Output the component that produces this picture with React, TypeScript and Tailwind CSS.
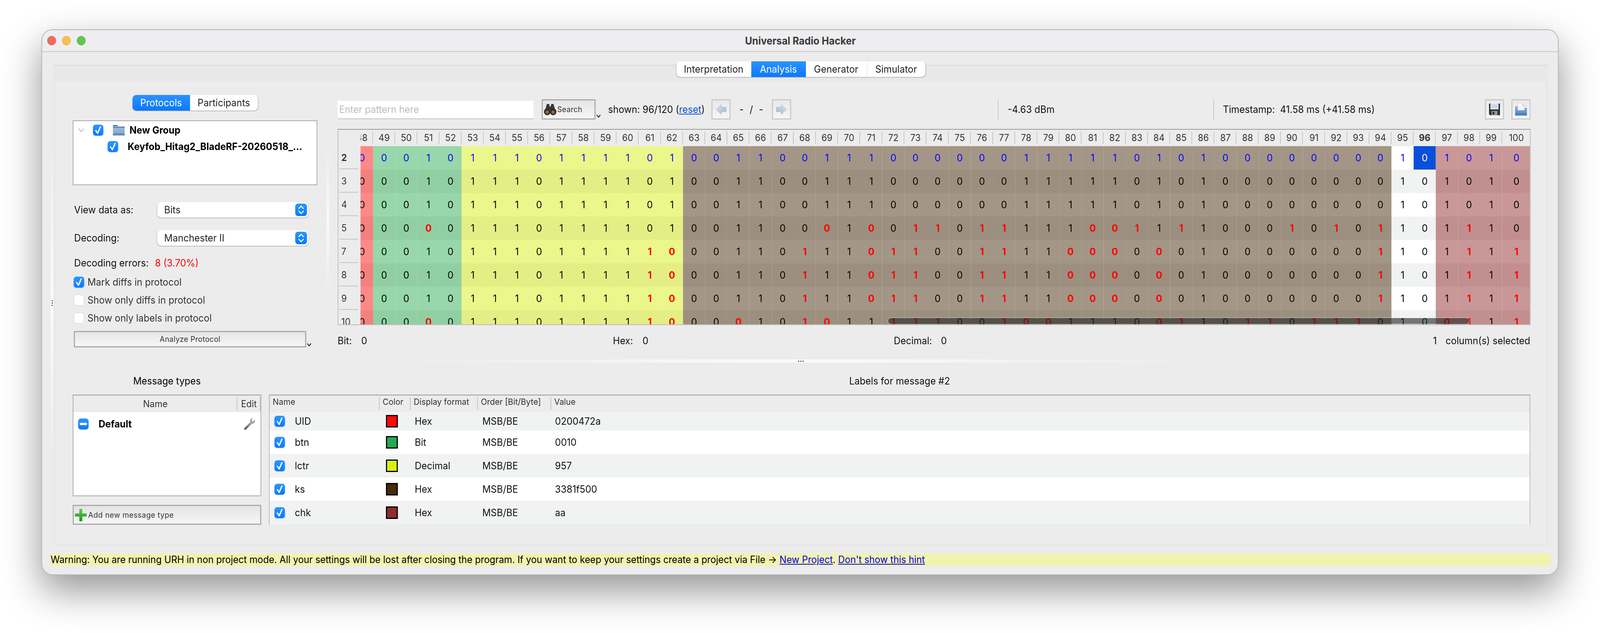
import React from "react";

const BASE = "00010" + "1110111101" + "001100111" + "000000" + "11111" + "0101" + "00000000" + "101010";
const C0 = 48;
const OV: Record<string, number[][]> = {
  r5: [[51,0],[69,0],[71,0],[73,1],[74,1],[76,1],[77,1],[81,0],[82,0],[83,1],[85,1],[90,1],[92,1],[94,1],[98,1]],
  r7: [[61,1],[62,0],[68,1],[71,0],[72,1],[73,1],[76,1],[77,1],[80,0],[81,0],[82,0],[84,0],[94,1],[98,1],[100,1]],
  r10: [[51,0],[61,1],[62,0],[65,0],[68,1],[69,0],[72,1],[73,1],[74,1],[77,1],[78,0],[79,0],[84,0],[85,1],[88,1],[89,1],[91,1],[92,1],[93,1],[97,0],[98,1],[100,1]],
};
const ROWS = [
  { n: 2, ov: [] as number[][] },
  { n: 3, ov: [] as number[][] },
  { n: 4, ov: [] as number[][] },
  { n: 5, ov: OV.r5 },
  { n: 7, ov: OV.r7 },
  { n: 8, ov: OV.r7 },
  { n: 9, ov: OV.r7 },
  { n: 10, ov: OV.r10 },
];
const COLS = Array.from({ length: 53 }, (_, i) => C0 + i);

function bg(col: number, dark: boolean) {
  if (col === 48) return dark ? "bg-[#f48080]" : "bg-[#fe8888]";
  if (col <= 52) return dark ? "bg-[#91cfa2]" : "bg-[#98d7aa]";
  if (col <= 62) return dark ? "bg-[#e4ee84]" : "bg-[#ebf78b]";
  if (col <= 94) return dark ? "bg-[#9c8f7f]" : "bg-[#a39686]";
  if (col <= 96) return dark ? "bg-[#f1f3f3]" : "bg-white";
  return dark ? "bg-[#c18f8f]" : "bg-[#c99797]";
}

function Check({ size = 28, on = true, minus = false }: { size?: number; on?: boolean; minus?: boolean }) {
  if (!on)
    return <div className="w-[28px] h-[28px] rounded-[7px] bg-white border border-[#cfcfcf] shrink-0" />;
  return (
    <div className="w-[28px] h-[28px] rounded-[7px] bg-gradient-to-b from-[#2b97ff] to-[#0a78ff] shadow-[0_1px_2px_rgba(0,90,220,0.35)] flex items-center justify-center shrink-0">
      {minus ? (
        <div className="w-[20px] h-[6px] rounded-[3px] bg-white" />
      ) : (
        <svg width={size - 8} height={size - 6} viewBox="0 0 20 22">
          <path d="M3.5 12 L8.5 19 L16 3" fill="none" stroke="white" strokeWidth="3.4" strokeLinecap="round" strokeLinejoin="round" />
        </svg>
      )}
    </div>
  );
}

function Stepper() {
  return (
    <div className="w-[32px] h-[32px] rounded-[8px] bg-gradient-to-b from-[#2b97ff] to-[#0a78ff] flex items-center justify-center">
      <svg width="20" height="26" viewBox="0 0 20 26">
        <path d="M4 9.5 L10 3.5 L16 9.5 M4 16.5 L10 22.5 L16 16.5" fill="none" stroke="white" strokeWidth="2.6" strokeLinecap="round" strokeLinejoin="round" />
      </svg>
    </div>
  );
}

function Select({ label, value }: { label: string; value: string }) {
  return (
    <div className="flex items-center h-[40px] pl-[4px]">
      <div className="w-[225px] text-[#111]">{label}</div>
      <div className="w-[410px] h-[40px] rounded-[10px] bg-white shadow-[0_1px_2px_rgba(0,0,0,0.38)] flex items-center justify-between pl-[19px] pr-[4px] text-[#222]">
        <span>{value}</span>
        <Stepper />
      </div>
    </div>
  );
}

function Folder() {
  return (
    <svg width="32" height="28" viewBox="0 0 32 28" className="shrink-0">
      <defs>
        <linearGradient id="fo" x1="0" y1="0" x2="0" y2="1">
          <stop offset="0" stopColor="#a9c4e4" />
          <stop offset="1" stopColor="#7c9fca" />
        </linearGradient>
      </defs>
      <path d="M0 1h12v3h20v24H0z" fill="url(#fo)" />
      <rect x="0" y="1" width="13" height="3" fill="#4e77a8" />
      <rect x="0" y="6" width="32" height="2" fill="#4e77a8" />
      <rect x="0" y="23" width="32" height="3" fill="#5b83b3" />
    </svg>
  );
}

function Binoculars() {
  return (
    <svg width="34" height="32" viewBox="0 0 34 32">
      <path d="M8 2h6l2 7h2l2-7h6l6 20H22l-1-5h-8l-1 5H2z" fill="#3a3a3a" />
      <circle cx="9" cy="22" r="9" fill="#2f2f2f" />
      <circle cx="25" cy="22" r="9" fill="#2f2f2f" />
      <circle cx="9" cy="23" r="4.5" fill="#a8641e" />
      <circle cx="25" cy="23" r="4.5" fill="#a8641e" />
    </svg>
  );
}

function Arrow({ flip = false }: { flip?: boolean }) {
  return (
    <svg width="30" height="28" viewBox="0 0 30 28" className={flip ? "-scale-x-100" : ""}>
      <defs>
        <linearGradient id="ar" x1="0" y1="0" x2="1" y2="1">
          <stop offset="0" stopColor="#dfe7f1" />
          <stop offset="1" stopColor="#9db3d0" />
        </linearGradient>
      </defs>
      <path d="M1 14 L16 1 V8 H29 V20 H16 V27 Z" fill="url(#ar)" stroke="#b4bfce" strokeWidth="1" strokeLinejoin="round" />
    </svg>
  );
}

function Floppy() {
  return (
    <svg width="30" height="30" viewBox="0 0 30 30">
      <path d="M0 0h30v30H3l-3-3z" fill="#333" />
      <rect x="4" y="0" width="22" height="15" fill="#dbe6f4" />
      <path d="M7 4h16M7 7h16M7 10h16" stroke="#9db5d3" strokeWidth="1" />
      <rect x="7" y="19" width="16" height="11" fill="#9a9a9a" />
      <rect x="10" y="21" width="5" height="7" fill="#333" />
    </svg>
  );
}

function OpenFile() {
  return (
    <svg width="34" height="32" viewBox="0 0 34 32">
      <defs>
        <linearGradient id="of" x1="0" y1="0" x2="0" y2="1">
          <stop offset="0" stopColor="#8db2dc" />
          <stop offset="1" stopColor="#4f86c2" />
        </linearGradient>
      </defs>
      <path d="M8 0h12l8 8v12H8z" fill="#f5f6f8" stroke="#c9ced6" />
      <path d="M20 0v8h8z" fill="#cfd5de" />
      <path d="M1 8h7v10h18v-6h7v20H1z" fill="url(#of)" />
      <rect x="1" y="26" width="32" height="2" fill="#3e74ae" />
    </svg>
  );
}

function Plus() {
  return (
    <svg width="32" height="32" viewBox="0 0 32 32" className="shrink-0">
      <defs>
        <linearGradient id="pl" x1="0" y1="0" x2="0" y2="1">
          <stop offset="0" stopColor="#5fcf5a" />
          <stop offset="1" stopColor="#16951f" />
        </linearGradient>
      </defs>
      <path d="M12 1.5a1.5 1.5 0 0 1 1.5-1.5h5A1.5 1.5 0 0 1 20 1.5V12h10.5a1.5 1.5 0 0 1 1.5 1.5v5a1.5 1.5 0 0 1-1.5 1.5H20v10.5a1.5 1.5 0 0 1-1.5 1.5h-5a1.5 1.5 0 0 1-1.5-1.5V20H1.5A1.5 1.5 0 0 1 0 18.5v-5A1.5 1.5 0 0 1 1.5 12H12z" fill="url(#pl)" />
    </svg>
  );
}

function WrenchIcon() {
  return (
    <svg width="30" height="30" viewBox="0 0 30 30" className="ml-auto mr-[15px] shrink-0">
      <defs>
        <linearGradient id="wr" x1="0" y1="1" x2="1" y2="0">
          <stop offset="0" stopColor="#555" />
          <stop offset="0.55" stopColor="#9a9a9a" />
          <stop offset="1" stopColor="#c8c8c8" />
        </linearGradient>
      </defs>
      <path d="M24 0c-4 .5-7 3.500-7 7.500 0 1.200.3 2.200.7 3.200L2 25c-1.500 1.500-1.500 3 0 4.200 1.300 1.200 2.800 1 4-.2l15.500-15.500c4.500 1.300 8.500-2 8.500-6.500 0-1-.2-1.800-.5-2.500l-4.500 4-3.500-1-.8-3.500z" fill="url(#wr)" stroke="#777" strokeWidth="0.6" />
    </svg>
  );
}

function Chevron() {
  return (
    <svg width="14" height="10" viewBox="0 0 14 10">
      <path d="M2 2 L7 8 L12 2" fill="none" stroke="#222" strokeWidth="2.2" />
    </svg>
  );
}

function Dots({ vertical = true }: { vertical?: boolean }) {
  return (
    <div className={vertical ? "flex flex-col gap-[3px]" : "flex gap-[3px]"}>
      <div className="w-[3px] h-[3px] rounded-full bg-[#222]" />
      <div className="w-[3px] h-[3px] rounded-full bg-[#222]" />
      <div className="w-[3px] h-[3px] rounded-full bg-[#222]" />
    </div>
  );
}

function IconBtn({ children }: { children: React.ReactNode }) {
  return (
    <div className="w-[52px] h-[52px] border-[3px] border-[#c9c9c9] bg-gradient-to-b from-[#e9e9e9] to-[#f5f5f5] flex items-center justify-center">
      {children}
    </div>
  );
}

function BitTable() {
  return (
    <div className="w-[3233px] h-[502px] border-t-2 border-t-[#9a9a9a] border-x-2 border-x-[#bdbdbd] border-b-2 border-b-[#bdbdbd] overflow-hidden relative bg-[#ececec]">
      <div className="flex h-[42px] text-[24px] text-[#333]">
        <div className="w-[60px] shrink-0 relative" />
        {COLS.map((c) => {
          const w = c === 48 ? "w-[34px]" : c === 100 ? "w-[77px]" : "w-[60px]";
          return (
            <div key={c} className={`${w} shrink-0 h-full relative overflow-hidden flex items-center justify-center ${c === 96 ? "font-bold" : ""}`}>
              {c === 48 ? <span className="w-[60px] shrink-0 -ml-[26px] text-center">48</span> : <span>{c}</span>}
              {c !== 100 && <div className="absolute right-0 top-[5px] bottom-[5px] w-[2px] bg-[#c4c4c4]" />}
            </div>
          );
        })}
      </div>
      {ROWS.map((r, i) => {
        const dark = i % 2 === 1;
        const map = new Map(r.ov.map((o) => [o[0], o[1]]));
        return (
          <div key={r.n} className="flex h-[60px]">
            <div className={`w-[60px] shrink-0 relative pl-[8px] flex items-center text-[24px] text-[#333] ${r.n === 2 ? "font-bold" : ""}`}>
              {r.n}
              {i < 7 && <div className="absolute left-[3px] right-[6px] bottom-[1px] h-[2px] bg-[#c4c4c4]" />}
            </div>
            {COLS.map((c) => {
              const v = map.has(c) ? map.get(c) : Number(BASE[c - C0]);
              const red = map.has(c);
              const selected = r.n === 2 && c === 96;
              const w = c === 48 ? "w-[34px]" : c === 100 ? "w-[77px]" : "w-[60px]";
              const color = selected ? "text-white" : red ? "text-[#ff0000] font-bold" : r.n === 2 ? "text-[#0000ff]" : "text-black";
              return (
                <div key={c} className={`${w} shrink-0 h-full overflow-hidden flex items-center justify-center ${selected ? "bg-[#0a4fdb]" : bg(c, dark)} ${color}`}>
                  {c === 48 ? <span className="w-[60px] shrink-0 -ml-[26px] text-center">{v}</span> : <span>{v}</span>}
                </div>
              );
            })}
          </div>
        );
      })}
      <div className="absolute left-[1488px] right-[163px] top-[480px] h-[19px] rounded-[9px] bg-[rgba(255,255,255,0.22)] flex items-center px-[2px]">
        <div className="w-full h-[15px] rounded-[8px] bg-[rgba(0,0,0,0.52)]" />
      </div>
    </div>
  );
}

const LABELS = [
  { name: "UID", color: "bg-[#ff0a0a]", fmt: "Hex", val: "0200472a", row: "bg-[#f1f3f3]", h: "h-[48px]" },
  { name: "btn", color: "bg-[#26a952]", fmt: "Bit", val: "0010", row: "bg-white", h: "h-[60px]" },
  { name: "lctr", color: "bg-[#d9f010]", fmt: "Decimal", val: "957", row: "bg-[#f1f3f3]", h: "h-[60px]" },
  { name: "ks", color: "bg-[#452c0c]", fmt: "Hex", val: "3381f500", row: "bg-white", h: "h-[60px]" },
  { name: "chk", color: "bg-[#8c2f2f]", fmt: "Hex", val: "aa", row: "bg-[#f1f3f3]", h: "h-[60px]" },
];

function Hd({ w, children }: { w: string; children: React.ReactNode }) {
  return (
    <div className={`${w} shrink-0 h-full relative pl-[8px] pt-[5px]`}>
      {children}
      <div className="absolute right-0 top-[4px] bottom-[5px] w-[2px] bg-[#c4c4c4]" />
    </div>
  );
}

export default function App() {
  return (
    <div className="w-[4096px] h-[1620px] bg-white overflow-hidden">
      <div className="w-[4336px] h-[1620px] origin-top-left scale-x-[0.94465] pl-[112px] pt-[75px] font-['Inter',sans-serif] text-[25.4px] leading-none text-[#111] antialiased">
        <div className="w-[4112px] h-[1397px] rounded-[30px] bg-[#ececec] border-2 border-[#b4b4b4] shadow-[0_40px_100px_rgba(0,0,0,0.42)] flex flex-col relative overflow-hidden">
          <div className="h-[56px] shrink-0 bg-[#eeeef0] border-b-2 border-b-[#c9c9c9] flex items-center relative">
            <div className="flex gap-[16px] pl-[14px]">
              <div className="w-[24px] h-[24px] rounded-full bg-[#ee6b60] border border-[#d9584f]" />
              <div className="w-[24px] h-[24px] rounded-full bg-[#f6c04f] border border-[#dfa83d]" />
              <div className="w-[24px] h-[24px] rounded-full bg-[#62c554] border border-[#50ae44]" />
            </div>
            <div className="flex-1 text-center font-bold text-[26.500px] text-[#3a3a3a] pr-[116px]">Universal Radio Hacker</div>
          </div>

          <div className="mt-[33px] ml-[30px] mr-[26px] h-[1231px] shrink-0 bg-[#e8e8e8] border-t-2 border-t-[#d9d9d9] flex flex-col">
            <div className="h-[40px] shrink-0 flex justify-center items-start">
              <div className="-mt-[11px] flex h-[40px] rounded-[10px] bg-white shadow-[0_1px_2px_rgba(0,0,0,0.38)] overflow-hidden text-[#222] text-center leading-[40px]">
                <div className="w-[203px]">Interpretation</div>
                <div className="w-[148px] bg-gradient-to-b from-[#2a93fc] to-[#0a78fe] text-white">Analysis</div>
                <div className="w-[166px] border-r border-r-[#dcdcdc]">Generator</div>
                <div className="w-[158px]">Simulator</div>
              </div>
            </div>

            <div className="mx-[6px] h-[1184px] shrink-0 bg-[#ececec] flex flex-col relative">
              {/* upper */}
              <div className="h-[712px] shrink-0 flex pl-[47px]">
                <div className="w-[663px] shrink-0 flex flex-col pt-[35px]">
                  <div className="self-center flex h-[40px] rounded-[10px] bg-white shadow-[0_1px_2px_rgba(0,0,0,0.38)] overflow-hidden text-center leading-[40px] text-[#222]">
                    <div className="w-[156px] bg-gradient-to-b from-[#2a93fc] to-[#0a78fe] text-white">Protocols</div>
                    <div className="w-[184px]">Participants</div>
                  </div>
                  <div className="mt-[25px] h-[166px] bg-white border-2 border-[#a9a9a9] flex flex-col pt-[8px]">
                    <div className="flex items-center h-[30px]">
                      <svg width="18" height="14" viewBox="0 0 18 14" className="ml-[12px] shrink-0">
                        <path d="M2 3 L9 11 L16 3" fill="none" stroke="#c2c2c2" strokeWidth="2.6" />
                      </svg>
                      <div className="ml-[23px]"><Check /></div>
                      <div className="ml-[26px]"><Folder /></div>
                      <div className="ml-[13px] font-bold text-black">New Group</div>
                    </div>
                    <div className="flex items-center h-[30px] mt-[12px] pl-[93px]">
                      <Check />
                      <div className="ml-[26px] font-bold text-black whitespace-nowrap">Keyfob_Hitag2_BladeRF-20260518_...</div>
                    </div>
                  </div>
                  <div className="mt-[43px]"><Select label="View data as:" value="Bits" /></div>
                  <div className="mt-[32px]"><Select label="Decoding:" value="Manchester II" /></div>
                  <div className="mt-[24px] h-[40px] pl-[4px] flex items-center">
                    <span className="w-[219px]">Decoding errors:</span>
                    <span className="text-[#ff0000]">8 (3.70%)</span>
                  </div>
                  <div className="mt-[15px] pl-[3px] flex items-center gap-[9px] h-[28px] text-[#333]"><Check /><span>Mark diffs in protocol</span></div>
                  <div className="mt-[18px] pl-[3px] flex items-center gap-[9px] h-[28px] text-[#333]"><Check on={false} /><span>Show only diffs in protocol</span></div>
                  <div className="mt-[18px] pl-[3px] flex items-center gap-[9px] h-[28px] text-[#333]"><Check on={false} /><span>Show only labels in protocol</span></div>
                  <div className="mt-[19px] pl-[3px] flex items-start">
                    <div className="w-[630px] h-[42px] border-[3px] border-[#aaa] bg-gradient-to-b from-[#e6e6e6] to-[#f6f6f6] flex items-center justify-center text-[20px] text-[#333] tracking-[0.3px]">Analyze Protocol</div>
                    <div className="ml-[1px] mt-[30px]"><Chevron /></div>
                  </div>
                </div>

                <div className="w-[55px] shrink-0 flex justify-center pt-[357px]"><Dots /></div>

                <div className="w-[3233px] shrink-0 flex flex-col pt-[46px]">
                  <div className="flex items-center h-[52px]">
                    <div className="w-[531px] h-[49px] bg-white border-b-2 border-b-[#c4c4c4] border-t border-t-[#dedede] flex items-center pl-[4px] text-[#bdbdbd]">Enter pattern here</div>
                    <div className="ml-[22px] w-[146px] h-[52px] border-[3px] border-[#aaa] bg-gradient-to-b from-[#e4e4e4] to-[#f6f6f6] flex items-center pl-[3px] gap-[2px] text-[20px] text-[#333] tracking-[0.3px]">
                      <Binoculars /><span>Search</span>
                    </div>
                    <div className="w-[34px] h-[52px] pl-[1px] pt-[38px]"><Chevron /></div>
                    <div className="w-[280px] text-[#111]">shown: 96/120 (<span className="text-[#0a50d8] underline">reset</span>)</div>
                    <IconBtn><Arrow /></IconBtn>
                    <div className="w-[112px] flex justify-center gap-[16px]"><span>-</span><span>/</span><span>-</span></div>
                    <IconBtn><Arrow flip /></IconBtn>
                    <div className="w-[560px]" />
                    <div className="w-[2px] h-[52px] bg-[#c9c9c9]" />
                    <div className="w-[582px] pl-[25px]">-4.63 dBm</div>
                    <div className="w-[2px] h-[52px] bg-[#c9c9c9]" />
                    <div className="w-[734px] pl-[24px]">Timestamp:&nbsp; 41.58 ms (+41.58 ms)</div>
                    <IconBtn><Floppy /></IconBtn>
                    <div className="ml-[20px]"><IconBtn><OpenFile /></IconBtn></div>
                  </div>
                  <div className="mt-[24px]"><BitTable /></div>
                  <div className="mt-[20px] h-[40px] flex items-center pr-[1px]">
                    <div className="w-[746px] flex"><span className="w-[64px]">Bit:</span><span>0</span></div>
                    <div className="w-[761px] flex"><span className="w-[80px]">Hex:</span><span>0</span></div>
                    <div className="flex-1 flex"><span className="w-[128px]">Decimal:</span><span>0</span></div>
                    <div className="flex"><span>1</span><span className="ml-[24px]">column(s) selected</span></div>
                  </div>
                </div>
              </div>

              {/* splitter */}
              <div className="h-[8px] shrink-0 flex items-center justify-center relative bg-gradient-to-r from-[#ececec] via-[#fbfbfb] to-[#ececec] mx-[910px]">
                <Dots vertical={false} />
              </div>

              {/* lower */}
              <div className="flex pl-[47px] pt-[28px]">
                <div className="w-[511px] shrink-0 flex flex-col">
                  <div className="h-[38px] text-center leading-[38px] text-black">Message types</div>
                  <div className="mt-[16px] h-[260px] border-2 border-[#aaa] border-t-[#9a9a9a] bg-white flex flex-col">
                    <div className="h-[43px] shrink-0 bg-[#ececec] flex text-[24px] text-[#333]">
                      <div className="w-[444px] flex items-center justify-center relative">
                        Name
                        <div className="absolute right-0 top-[4px] bottom-[4px] w-[2px] bg-[#c4c4c4]" />
                      </div>
                      <div className="flex-1 flex items-center justify-center relative">
                        Edit
                        <div className="absolute right-0 top-[4px] bottom-[4px] w-[2px] bg-[#c4c4c4]" />
                      </div>
                    </div>
                    <div className="flex items-center pl-[13px] h-[30px] mt-[15px]">
                      <Check minus />
                      <span className="ml-[27px] font-bold text-black">Default</span>
                      <WrenchIcon />
                    </div>
                  </div>
                  <div className="mt-[22px] h-[51px] border-[3px] border-[#aaa] bg-gradient-to-b from-[#e4e4e4] to-[#f6f6f6] flex items-center pl-[3px] gap-[4px] text-[20px] text-[#333] tracking-[0.5px]">
                    <Plus /><span>Add new message type</span>
                  </div>
                </div>

                <div className="ml-[21px] w-[3418px] shrink-0 flex flex-col">
                  <div className="h-[38px] text-center leading-[38px] text-[#111]">Labels for message #2</div>
                  <div className="mt-[16px] h-[332px] border-2 border-[#b4b4b4] border-t-[#9a9a9a] bg-[#ececec] flex flex-col">
                    <div className="h-[42px] shrink-0 flex text-[22px] text-[#333]">
                      <Hd w="w-[298px]">Name</Hd>
                      <Hd w="w-[84px]">Color</Hd>
                      <Hd w="w-[182px]">Display format</Hd>
                      <Hd w="w-[199px]">Order [Bit/Byte]</Hd>
                      <div className="flex-1 pl-[8px] pt-[5px]">Value</div>
                    </div>
                    {LABELS.map((l) => (
                      <div key={l.name} className={`${l.h} ${l.row} flex items-center shrink-0`}>
                        <div className="w-[298px] flex items-center pl-[13px] shrink-0">
                          <Check />
                          <span className="ml-[27px]">{l.name}</span>
                        </div>
                        <div className="w-[84px] pl-[17px] shrink-0">
                          <div className={`w-[32px] h-[32px] border-[3px] border-black ${l.color}`} />
                        </div>
                        <div className="w-[182px] pl-[11px] shrink-0">{l.fmt}</div>
                        <div className="w-[199px] pl-[12px] shrink-0">MSB/BE</div>
                        <div className="pl-[10px]">{l.val}</div>
                      </div>
                    ))}
                  </div>
                </div>
              </div>

              {/* sash highlight */}
              <div className="absolute left-[735px] top-[160px] w-[7px] h-[390px] bg-gradient-to-b from-[#ececec] via-[#fafafa] to-[#ececec]" />
            </div>
          </div>

          <div className="mt-[20px] ml-[23px] w-[4066px] h-[31px] bg-[#f2f2ae] flex items-center whitespace-nowrap text-black text-[25.2px]">
            Warning: You are running URH in non project mode. All your settings will be lost after closing the program. If you want to keep your settings create a project via File -&gt;&nbsp;<span className="text-[#0000ee] underline">New Project</span>.&nbsp;<span className="text-[#0000ee] underline">Don't show this hint</span>
          </div>

          <div className="absolute left-[23px] top-[308px] w-[8px] h-[780px] bg-gradient-to-b from-[#ececec] via-[#fbfbfb] to-[#ececec] flex items-center justify-center">
            <Dots />
          </div>
        </div>
      </div>
    </div>
  );
}
